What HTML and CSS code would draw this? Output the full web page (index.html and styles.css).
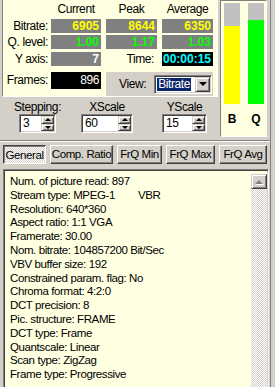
FILE: index.html
```html
<!DOCTYPE html>
<html lang="en">
<head>
  <meta charset="UTF-8" />
  <meta name="viewport" content="width=device-width, initial-scale=1" />
  <title>Stream Info</title>
  <link rel="stylesheet" href="styles.css">
</head>
<body>
  <div class="window">
    <div class="top">
      <div class="left-col">
        <!-- live values -->
        <div class="stats">
          <span></span>
          <span class="col-head">Current</span>
          <span class="col-head">Peak</span>
          <span class="col-head">Average</span>

          <span class="row-label">Bitrate:</span>
          <span class="val yellow">6905</span>
          <span class="val yellow">8644</span>
          <span class="val yellow">6350</span>

          <span class="row-label">Q. level:</span>
          <span class="val green">1.00</span>
          <span class="val green">1.17</span>
          <span class="val green">1.03</span>

          <span class="row-label">Y axis:</span>
          <span class="val white">7</span>
          <span class="row-label time-label">Time:</span>
          <span class="val time">00:00:15</span>

          <span class="row-label frames-label">Frames:</span>
          <span class="val frames">896</span>
          <div class="view-box">
            <span class="view-label">View:</span>
            <div class="combo">
              <span class="combo-text"><span class="sel">Bitrate</span></span>
              <span class="combo-btn"><i class="arrow-down"></i></span>
            </div>
          </div>
        </div>

        <div class="spins">
          <div class="spin-group step">
            <span class="spin-label">Stepping:</span>
            <div class="spin">
              <span class="spin-value">3</span>
              <span class="spin-btns"><span><i class="arrow-up"></i></span><span><i class="arrow-dn"></i></span></span>
            </div>
          </div>
          <div class="spin-group xscale">
            <span class="spin-label">XScale</span>
            <div class="spin">
              <span class="spin-value">60</span>
              <span class="spin-btns"><span><i class="arrow-up"></i></span><span><i class="arrow-dn"></i></span></span>
            </div>
          </div>
          <div class="spin-group yscale">
            <span class="spin-label">YScale</span>
            <div class="spin">
              <span class="spin-value">15</span>
              <span class="spin-btns"><span><i class="arrow-up"></i></span><span><i class="arrow-dn"></i></span></span>
            </div>
          </div>
        </div>
      </div>

      <!-- B / Q meters -->
      <div class="meters">
        <div class="meter">
          <div class="bar"><div class="fill fill-b" style="height:77%"></div></div>
          <b>B</b>
        </div>
        <div class="meter">
          <div class="bar"><div class="fill fill-q" style="height:83%"></div></div>
          <b>Q</b>
        </div>
      </div>
    </div>

    <div class="tabs">
      <div class="tab active tab-general">General</div>
      <div class="tab tab-ratio">Comp. Ratio</div>
      <div class="tab tab-min">FrQ Min</div>
      <div class="tab tab-max">FrQ Max</div>
      <div class="tab tab-avg">FrQ Avg</div>
    </div>

    <div class="info">
      <div class="lines">
        <div>Num. of picture read: 897</div>
        <div><span class="stream">Stream type: MPEG-1</span>VBR</div>
        <div>Resolution: 640*360</div>
        <div>Aspect ratio: 1:1 VGA</div>
        <div>Framerate: 30.00</div>
        <div>Nom. bitrate: 104857200 Bit/Sec</div>
        <div>VBV buffer size: 192</div>
        <div>Constrained param. flag: No</div>
        <div>Chroma format: 4:2:0</div>
        <div>DCT precision: 8</div>
        <div>Pic. structure: FRAME</div>
        <div>DCT type: Frame</div>
        <div>Quantscale: Linear</div>
        <div>Scan type: ZigZag</div>
        <div>Frame type: Progressive</div>
      </div>
      <div class="scrollbar">
        <div class="scroll-up"><i class="arrow-off"></i></div>
      </div>
    </div>
  </div>
</body>
</html>
```

FILE: styles.css
```css
:root {
  --face: #d4d0c8;
  --shadow: #808080;
  --dark: #404040;
  --light: #fff;
  --info-bg: #ffffe1;
  --checker: repeating-conic-gradient(#fff 0 25%, #d4d0c8 0 50%) 0 0 / 2px 2px;
}

body {
  margin: 0;
  height: 387px;
  overflow: hidden;
  background: var(--face);
  color: #000;
  font-family: 'Liberation Sans', Arial, sans-serif;
  font-size: 11.5px;
  letter-spacing: -0.4px;
}

.window {
  width: 270px;
  height: 387px;
  border-right: 1px solid var(--shadow);
}

/* raised / sunken 3d edges */
.raised {
  border: 1px solid;
  border-color: var(--light) var(--dark) var(--dark) var(--light);
  box-shadow: inset -1px -1px var(--shadow);
}

.top {
  display: flex;
  height: 140px;
  border-bottom: 1px solid var(--shadow);
  box-shadow: 0 1px 0 var(--light);
}
.left-col {
  width: 216px;
  padding-left: 2px;
}

.stats {
  display: grid;
  grid-template-columns: 43px 50px 51px 51px;
  grid-template-rows: 14px 14px 14px 14px 28px;
  column-gap: 5px;
  row-gap: 2.5px;
  padding: 2px 4px 0 0;
  background: var(--info-bg);
  border-left: 1px solid var(--shadow);
  border-right: 1px solid var(--light);
  border-bottom: 1px solid var(--light);
}
.col-head {
  text-align: center;
  line-height: 14px;
  font-size: 12px;
}
.row-label {
  text-align: right;
  line-height: 14px;
  font-size: 12px;
  margin-right: -2px;
}
.time-label {
  margin-right: 3px;
}
.val {
  background: var(--shadow);
  text-align: right;
  padding-right: 2px;
  font-size: 12px;
  font-weight: bold;
  letter-spacing: 0;
  line-height: 14px;
}
.yellow { color: #ff0; }
.green { color: #0f0; }
.white { color: #fff; }
.time {
  background: #000;
  color: #0ff;
}
.frames-label,
.frames {
  align-self: start;
  margin-top: 4px;
  height: 17px;
  line-height: 17px;
}
.frames {
  background: #000;
  color: #fff;
  font-weight: normal;
  letter-spacing: -0.4px;
}

.view-box {
  grid-column: 3 / 5;
  margin-top: 4px;
  background: var(--face);
  display: flex;
  align-items: center;
  padding-left: 13px;
}
.view-label {
  font-size: 12px;
}
.combo {
  margin-left: 8px;
  width: 58px;
  height: 19px;
  box-sizing: border-box;
  padding: 1px;
  display: flex;
  background: #fff;
  border: 1px solid;
  border-color: var(--shadow) var(--light) var(--light) var(--shadow);
  box-shadow: inset 1px 1px var(--dark), inset -1px -1px var(--face);
}
.combo-text {
  flex: 1;
  display: flex;
  align-items: center;
  padding-left: 1px;
}
.sel {
  background: #0a246a;
  color: #fff;
  font-size: 12px;
  line-height: 13px;
  padding: 0 1px;
}
.combo-btn {
  width: 15px;
  box-sizing: border-box;
  display: flex;
  align-items: center;
  justify-content: center;
  background: var(--face);
  border: 1px solid;
  border-color: var(--face) var(--dark) var(--dark) var(--face);
  box-shadow: inset 1px 1px var(--light), inset -1px -1px var(--shadow);
}
.arrow-down {
  border-left: 4px solid transparent;
  border-right: 4px solid transparent;
  border-top: 4px solid #000;
}

/* spin edits */
.spins {
  display: flex;
  padding-top: 4px;
}
.spin-group {
  display: flex;
  flex-direction: column;
  align-items: center;
}
.step { margin-left: 17px; width: 37px; }
.xscale { margin-left: 25px; width: 52px; }
.yscale { margin-left: 29px; width: 45px; }
.spin-label {
  font-size: 12px;
  line-height: 13px;
  white-space: nowrap;
}
.spin {
  width: 100%;
  height: 19px;
  box-sizing: border-box;
  padding: 1px;
  display: flex;
  background: #fff;
  border: 1px solid;
  border-color: var(--shadow) var(--light) var(--light) var(--shadow);
  box-shadow: inset 1px 1px var(--dark), inset -1px -1px var(--face);
}
.spin-value {
  flex: 1;
  padding-left: 2px;
  font-size: 12px;
  line-height: 15px;
}
.spin-btns {
  width: 13px;
  display: flex;
  flex-direction: column;
}
.spin-btns span {
  flex: 1;
  display: flex;
  align-items: center;
  justify-content: center;
  background: var(--face);
  border: 1px solid;
  border-color: var(--face) var(--dark) var(--dark) var(--face);
  box-shadow: inset 1px 1px var(--light), inset -1px -1px var(--shadow);
}
.arrow-up {
  border-left: 3px solid transparent;
  border-right: 3px solid transparent;
  border-bottom: 3px solid #000;
}
.arrow-dn {
  border-left: 3px solid transparent;
  border-right: 3px solid transparent;
  border-top: 3px solid #000;
}

/* meters */
.meters {
  margin-left: 2px;
  width: 40px;
  height: 133px;
  padding: 2px 2px 0 3px;
  display: flex;
  gap: 8px;
  background: var(--info-bg);
  border: 1px solid;
  border-color: var(--shadow) var(--light) var(--light) var(--shadow);
}
.meter {
  width: 16px;
  display: flex;
  flex-direction: column;
  align-items: center;
}
.bar {
  width: 16px;
  height: 101px;
  background: #c0c0c0;
  display: flex;
  align-items: flex-end;
}
.fill {
  width: 100%;
}
.fill-b { background: #ff0; }
.fill-q { background: #0f0; }
.meter b {
  margin-top: 8px;
  font-size: 12px;
  line-height: 14px;
  letter-spacing: 0;
}

/* tab buttons */
.tabs {
  display: flex;
  gap: 4px;
  padding-left: 3px;
  margin-top: 4px;
}
.tab {
  height: 19px;
  box-sizing: border-box;
  text-align: center;
  line-height: 17px;
  background: var(--face);
  border: 1px solid;
  border-color: var(--light) var(--dark) var(--dark) var(--light);
  box-shadow: inset -1px -1px var(--shadow);
}
.tab.active {
  background: var(--checker);
  border-color: var(--dark) var(--light) var(--light) var(--dark);
  box-shadow: inset 1px 1px var(--shadow);
  line-height: 19px;
}
.tab-general { width: 43px; }
.tab-ratio { width: 63px; }
.tab-min { width: 45px; }
.tab-max { width: 49px; }
.tab-avg { width: 48px; }

/* info memo */
.info {
  margin: 5px 0 0 3px;
  width: 266px;
  height: 230px;
  box-sizing: border-box;
  padding: 1px;
  display: flex;
  background: var(--info-bg);
  border: 1px solid;
  border-color: var(--shadow) var(--light) var(--light) var(--shadow);
  box-shadow: inset 1px 1px var(--dark), inset -1px -1px var(--face);
}
.lines {
  flex: 1;
  padding: 4px 0 0 5px;
  line-height: 13.8px;
  white-space: nowrap;
}
.stream {
  display: inline-block;
  width: 128px;
}
.scrollbar {
  width: 16px;
  margin-top: 3px;
  background: var(--checker);
}
.scroll-up {
  height: 15px;
  box-sizing: border-box;
  display: flex;
  align-items: center;
  justify-content: center;
  background: var(--face);
  border: 1px solid;
  border-color: var(--face) var(--dark) var(--dark) var(--face);
  box-shadow: inset 1px 1px var(--light), inset -1px -1px var(--shadow);
}
.arrow-off {
  border-left: 4px solid transparent;
  border-right: 4px solid transparent;
  border-bottom: 4px solid var(--shadow);
  filter: drop-shadow(1px 1px 0 #fff);
}
```
